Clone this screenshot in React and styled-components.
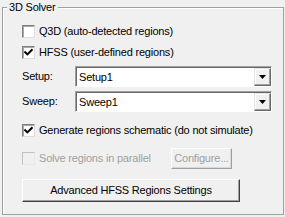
import React from "react";
import styled, { createGlobalStyle } from "styled-components";

const Global = createGlobalStyle`
  html, body { margin: 0; padding: 0; background: #f0f0f0; }
  body { font-family: "Liberation Sans", Arial, sans-serif; font-size: 11px; letter-spacing: -0.2px; color: #000; }
  * { box-sizing: border-box; }
`;

const Group = styled.div`
  position: relative;
  margin: 7px 1px 0 2px;
  height: 208px;
  border: 1px solid #a0a0a0;
  box-shadow: inset 1px 1px 0 #fff;
`;

const Legend = styled.div`
  position: absolute;
  top: -8px;
  left: 4px;
  padding: 0 2px;
  line-height: 14px;
  height: 14px;
  background: #f0f0f0;
`;

const Content = styled.div`
  display: flex;
  flex-direction: column;
  padding: 17px 0 0 19px;
`;

const Row = styled.div`
  display: flex;
  align-items: center;
  height: ${(p) => p.$h || 13}px;
  margin-top: ${(p) => p.$mt || 0}px;
`;

const Box = styled.span`
  display: inline-flex;
  align-items: center;
  justify-content: center;
  width: 13px;
  height: 13px;
  flex: none;
  border: 1px solid;
  border-color: ${(p) => (p.$disabled ? "#c0c0c0 #e8e8e8 #e8e8e8 #c0c0c0" : "#808080 #dcdcdc #dcdcdc #808080")};
  background: ${(p) => (p.$disabled ? "#f0f0f0" : "#fff")};
  box-shadow: ${(p) => (p.$disabled ? "none" : "inset 1px 1px 0 #a8a8a8")};
`;

const Label = styled.span`
  margin-left: 4px;
  line-height: 13px;
  white-space: nowrap;
  color: ${(p) => (p.$disabled ? "#a0a0a0" : "#000")};
  width: ${(p) => (p.$w ? `${p.$w}px` : "auto")};
`;

const FieldLabel = styled.span`
  width: 53px;
  flex: none;
  line-height: 13px;
`;

const Combo = styled.div`
  display: flex;
  align-items: center;
  width: 197px;
  height: 21px;
  border: 1px solid;
  border-color: #a0a0a0 #fff #fff #a0a0a0;
  background: #fff;
  box-shadow: inset 1px 1px 0 #696969;
  padding: 1px 0 0 2px;
`;

const ComboText = styled.span`
  flex: 1;
  line-height: 13px;
  padding-left: 1px;
`;

const DropButton = styled.span`
  display: flex;
  align-items: center;
  justify-content: center;
  width: 17px;
  height: 18px;
  margin-top: -1px;
  background: #f0f0f0;
  border: 1px solid;
  border-color: #e3e3e3 #696969 #696969 #e3e3e3;
  box-shadow: inset -1px -1px 0 #a0a0a0, inset 1px 1px 0 #fff;
`;

const Button = styled.div`
  display: flex;
  align-items: center;
  justify-content: center;
  width: ${(p) => p.$w}px;
  height: ${(p) => p.$h}px;
  background: #f0f0f0;
  border: 1px solid;
  border-color: ${(p) => (p.$default ? "#fff #404040 #404040 #fff" : "#fff #a0a0a0 #a0a0a0 #fff")};
  box-shadow: ${(p) => (p.$default ? "inset -1px -1px 0 #a0a0a0" : "inset -1px -1px 0 #d8d8d8")};
  color: ${(p) => (p.$disabled ? "#a0a0a0" : "#000")};
  white-space: nowrap;
  line-height: 13px;
`;

const Check = () => (
  <svg width="9" height="9" viewBox="0 0 9 9">
    <path d="M1.2 4.2 L3.4 6.4 L7.8 2" fill="none" stroke="#000" strokeWidth="2" strokeLinecap="square" />
  </svg>
);

const Arrow = () => (
  <svg width="7" height="4" viewBox="0 0 7 4">
    <path d="M0 0 H7 L3.5 4 Z" fill="#000" />
  </svg>
);

const CheckBox = ({ checked, disabled, children, w }) => (
  <>
    <Box $disabled={disabled}>{checked && <Check />}</Box>
    <Label $disabled={disabled} $w={w}>{children}</Label>
  </>
);

export default function App() {
  return (
    <>
      <Global />
      <Group>
        <Legend>3D Solver</Legend>
        <Content>
          <Row>
            <CheckBox>Q3D (auto-detected regions)</CheckBox>
          </Row>
          <Row $mt={8}>
            <CheckBox checked>HFSS (user-defined regions)</CheckBox>
          </Row>
          <Row $h={21} $mt={7}>
            <FieldLabel>Setup:</FieldLabel>
            <Combo>
              <ComboText>Setup1</ComboText>
              <DropButton><Arrow /></DropButton>
            </Combo>
          </Row>
          <Row $h={21} $mt={4}>
            <FieldLabel>Sweep:</FieldLabel>
            <Combo>
              <ComboText>Sweep1</ComboText>
              <DropButton><Arrow /></DropButton>
            </Combo>
          </Row>
          <Row $mt={12}>
            <CheckBox checked>Generate regions schematic (do not simulate)</CheckBox>
          </Row>
          <Row $h={21} $mt={11}>
            <CheckBox disabled w={132}>Solve regions in parallel</CheckBox>
            <Button $w={61} $h={21} $disabled>Configure...</Button>
          </Row>
          <Row $h={23} $mt={10}>
            <Button $w={218} $h={23} $default>Advanced HFSS Regions Settings</Button>
          </Row>
        </Content>
      </Group>
    </>
  );
}
